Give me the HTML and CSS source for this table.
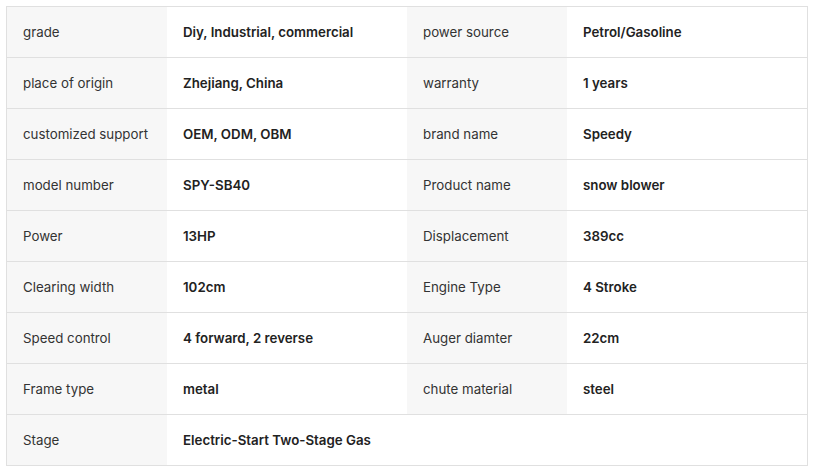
FILE: index.html
```html
<!DOCTYPE html>
<html>
<head>
<meta charset="utf-8">
<link rel="stylesheet" href="styles.css">
</head>
<body>
<div class="spec">
  <div class="row"><div class="k">grade</div><div class="v">Diy, Industrial, commercial</div><div class="k">power source</div><div class="v">Petrol/Gasoline</div></div>
  <div class="row"><div class="k">place of origin</div><div class="v">Zhejiang, China</div><div class="k">warranty</div><div class="v">1 years</div></div>
  <div class="row"><div class="k">customized support</div><div class="v">OEM, ODM, OBM</div><div class="k">brand name</div><div class="v">Speedy</div></div>
  <div class="row"><div class="k">model number</div><div class="v">SPY-SB40</div><div class="k">Product name</div><div class="v">snow blower</div></div>
  <div class="row"><div class="k">Power</div><div class="v">13HP</div><div class="k">Displacement</div><div class="v">389cc</div></div>
  <div class="row"><div class="k">Clearing width</div><div class="v">102cm</div><div class="k">Engine Type</div><div class="v">4 Stroke</div></div>
  <div class="row"><div class="k">Speed control</div><div class="v">4 forward, 2 reverse</div><div class="k">Auger diamter</div><div class="v">22cm</div></div>
  <div class="row"><div class="k">Frame type</div><div class="v">metal</div><div class="k">chute material</div><div class="v">steel</div></div>
  <div class="row"><div class="k">Stage</div><div class="v wide">Electric-Start Two-Stage Gas</div></div>
</div>
</body>
</html>
```
FILE: styles.css
```css
html, body {
  margin: 0;
  padding: 0;
  background: #fff;
}
body {
  padding: 6px;
  font-family: Inter, "Liberation Sans", sans-serif;
  font-size: 13.3px;
}
.spec {
  width: 800px;
  border: 1px solid #e0e0e0;
}
.row {
  display: flex;
  border-bottom: 1px solid #e0e0e0;
}
.row:last-child {
  border-bottom: none;
}
.k, .v {
  height: 50px;
  display: flex;
  align-items: center;
  padding: 0 16px 1px;
  box-sizing: border-box;
  white-space: nowrap;
}
.k {
  width: 160px;
  background: #f7f7f7;
  color: #333;
}
.v {
  width: 240px;
  font-weight: 600;
  color: #222;
}
.v.wide {
  width: 640px;
}
```
